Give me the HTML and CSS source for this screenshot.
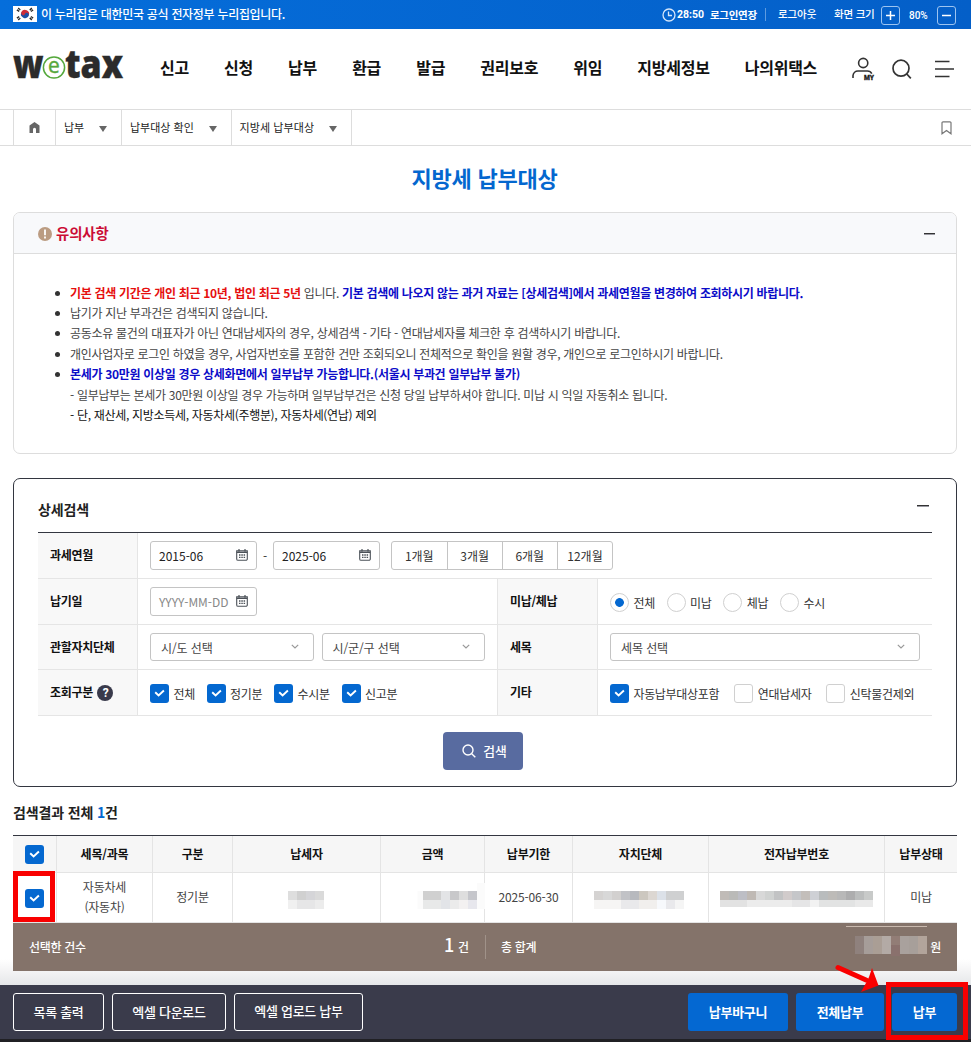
FILE: index.html
```html
<!DOCTYPE html>
<html lang="ko">
<head>
<meta charset="utf-8">
<title>지방세 납부대상</title>
<link rel="stylesheet" href="styles.css">
</head>
<body>
<svg class="defs" width="0" height="0" aria-hidden="true">
  <symbol id="cal" viewBox="0 0 12 12"><path d="M.7 1.900h10.600v8a1.400 1.400 0 0 1-1.400 1.400H2.100a1.400 1.400 0 0 1-1.400-1.400z" fill="none" stroke="#4b5158" stroke-width="1.100"/><path d="M.7 3.300h10.600M3 0v2.600M9 0v2.600" stroke="#4b5158" stroke-width="1.200" fill="none"/><path d="M3 6h1.500M5.300 6h1.500M7.600 6h1.500M3 8.400h1.500M5.300 8.400h1.500M7.600 8.400h1.500" stroke="#4b5158" stroke-width="1.400"/></symbol>
  <symbol id="chev" viewBox="0 0 8 5"><path d="M.8.8 4 4 7.200.8" fill="none" stroke="#999" stroke-width="1.200"/></symbol>
  <symbol id="check" viewBox="0 0 19 19"><path d="M5.200 8.200 8.600 11.500l5.300-5" fill="none" stroke="#fff" stroke-width="1.900"/></symbol>
</svg>

<div class="topbar">
  <svg class="flag" width="24" height="16" viewBox="0 0 24 16"><path fill="#fff" d="M0 0h24v16H0z"/><g transform="rotate(25 12 8)"><path d="M8 8a4 4 0 0 1 8 0z" fill="#cd2e3a"/><path d="M8 8a4 4 0 0 0 8 0z" fill="#1b50a5"/><circle cx="10" cy="8" r="2" fill="#cd2e3a"/><circle cx="14" cy="8" r="2" fill="#1b50a5"/></g><path d="M4 4.800 6.200 2M5.200 5.600 7.200 3M17.800 2 20 4.800M16.800 3l2 2.600M4 11.200 6.200 14M5.200 10.400l2 2.600M17.800 14l2.200-2.800M16.800 13l2-2.600" stroke="#222" stroke-width="1.300" stroke-dasharray="1.600 .5"/></svg>
  <span class="gov">이 누리집은 대한민국 공식 전자정부 누리집입니다.</span>
  <div class="util">
    <svg width="14" height="14" viewBox="0 0 14 14" fill="none" stroke="#d5e6fa" stroke-width="1.300"><circle cx="7" cy="7" r="6"/><path d="M6.500 3.500V7.500H10"/></svg>
    <b class="time">28:50</b><b class="extend">로그인연장</b><i class="bar"></i>
    <span class="logout">로그아웃</span><span class="size">화면 크기</span>
    <span class="zoombtn"><svg width="9" height="9" viewBox="0 0 9 9"><path d="M4.500 0v9M0 4.500h9" stroke="#fff" stroke-width="1.500"/></svg></span>
    <span class="pct">80%</span>
    <span class="zoombtn"><svg width="9" height="9" viewBox="0 0 9 9"><path d="M0 4.500h9" stroke="#fff" stroke-width="1.500"/></svg></span>
  </div>
</div>

<header class="header">
  <svg class="logo" width="112" height="32" viewBox="0 0 112 32">
    <text class="lg" x="0" y="27" textLength="30.500" lengthAdjust="spacingAndGlyphs">w</text>
    <text class="lg" x="52" y="27" textLength="58" lengthAdjust="spacingAndGlyphs">tax</text>
    <circle cx="41" cy="16.500" r="10.600" fill="#fff" stroke="#55a83c" stroke-width="1.500"/>
    <text class="le" x="41" y="22" text-anchor="middle">e</text>
  </svg>
  <nav class="nav"><span>신고</span><span>신청</span><span>납부</span><span>환급</span><span>발급</span><span>권리보호</span><span>위임</span><span>지방세정보</span><span>나의위택스</span></nav>
  <div class="tools">
    <svg width="24" height="26" viewBox="0 0 24 26" fill="none" stroke="#333" stroke-width="1.600"><circle cx="11.200" cy="7" r="4.600"/><path d="M1 22v-2.500A5 5 0 0 1 6 15h9.200a5 5 0 0 1 4.600 2.600"/><text class="my" x="12" y="24" textLength="10" lengthAdjust="spacingAndGlyphs">MY</text></svg>
    <svg width="20" height="21" viewBox="0 0 20 21" fill="none" stroke="#333" stroke-width="1.700"><circle cx="9" cy="9.200" r="8"/><path d="m14.800 15 4 4.300"/></svg>
    <svg width="20" height="18" viewBox="0 0 20 18" stroke="#333" stroke-width="1.700"><path d="M0 1.500h14.500M0 9h19M0 16.500h14.500"/></svg>
  </div>
</header>

<div class="crumbs">
  <span class="home"><svg width="11" height="11" viewBox="0 0 11 11"><path d="M5.500 0 10.500 3.600V11H7V7.200a1.500 1.500 0 0 0-3 0V11H.5V3.600z" fill="#666"/></svg></span>
  <span class="c1">납부<i></i></span><span class="c2">납부대상 확인<i></i></span><span class="c3">지방세 납부대상<i></i></span>
  <svg class="bookmark" width="11" height="14" viewBox="0 0 11 14"><path d="M1 1.800A1 1 0 0 1 2 .8h7a1 1 0 0 1 1 1v11L5.500 9.600 1 12.800z" fill="none" stroke="#777" stroke-width="1.200"/></svg>
</div>

<h1>지방세 납부대상</h1>

<section class="notice">
  <div class="nhead"><svg width="14" height="14" viewBox="0 0 14 14"><circle cx="7" cy="7" r="7" fill="#bb9c82"/><path d="M7 2.600v5.600M7 9.500v1.900" stroke="#fff" stroke-width="1.800"/></svg><span>유의사항</span><i class="minus"></i></div>
  <ul>
    <li class="l1"><b class="red">기본 검색 기간은 개인 최근 10년, 법인 최근 5년</b> 입니다. <b class="blue">기본 검색에 나오지 않는 과거 자료는 [상세검색]에서 과세연월을 변경하여 조회하시기 바랍니다.</b></li>
    <li>납기가 지난 부과건은 검색되지 않습니다.</li>
    <li>공동소유 물건의 대표자가 아닌 연대납세자의 경우, 상세검색 - 기타 - 연대납세자를 체크한 후 검색하시기 바랍니다.</li>
    <li>개인사업자로 로그인 하였을 경우, 사업자번호를 포함한 건만 조회되오니 전체적으로 확인을 원할 경우, 개인으로 로그인하시기 바랍니다.</li>
    <li><b class="blue">본세가 30만원 이상일 경우 상세화면에서 일부납부 가능합니다.(서울시 부과건 일부납부 불가)</b></li>
    <li class="sub">- 일부납부는 본세가 30만원 이상일 경우 가능하며 일부납부건은 신청 당일 납부하셔야 합니다. 미납 시 익일 자동취소 됩니다.</li>
    <li class="sub dark">- 단, 재산세, 지방소득세, 자동차세(주행분), 자동차세(연납) 제외</li>
  </ul>
</section>

<section class="search">
  <div class="shead"><span>상세검색</span><i class="minus"></i></div>
  <div class="form">
    <div class="th">과세연월</div>
    <div class="td wide">
      <span class="input">2015-06<svg width="12" height="12"><use href="#cal"/></svg></span><span class="dash">-</span><span class="input">2025-06<svg width="12" height="12"><use href="#cal"/></svg></span>
      <span class="months"><span>1개월</span><span>3개월</span><span>6개월</span><span>12개월</span></span>
    </div>
    <div class="th">납기일</div>
    <div class="td"><span class="input ph">YYYY-MM-DD<svg width="12" height="12"><use href="#cal"/></svg></span></div>
    <div class="th second">미납/체납</div>
    <div class="td opts">
      <label><i class="radio on"></i>전체</label><label><i class="radio"></i>미납</label><label><i class="radio"></i>체납</label><label><i class="radio"></i>수시</label>
    </div>
    <div class="th">관할자치단체</div>
    <div class="td selects"><span class="select">시/도 선택<svg width="8" height="5"><use href="#chev"/></svg></span><span class="select">시/군/구 선택<svg width="8" height="5"><use href="#chev"/></svg></span></div>
    <div class="th second">세목</div>
    <div class="td selects"><span class="select">세목 선택<svg width="8" height="5"><use href="#chev"/></svg></span></div>
    <div class="th">조회구분<i class="help">?</i></div>
    <div class="td opts">
      <label><svg class="chk on"><use href="#check"/></svg>전체</label><label><svg class="chk on"><use href="#check"/></svg>정기분</label><label><svg class="chk on"><use href="#check"/></svg>수시분</label><label><svg class="chk on"><use href="#check"/></svg>신고분</label>
    </div>
    <div class="th second">기타</div>
    <div class="td opts etc">
      <label><svg class="chk on"><use href="#check"/></svg>자동납부대상포함</label><label><i class="chk"></i>연대납세자</label><label><i class="chk"></i>신탁물건제외</label>
    </div>
  </div>
  <div class="go"><svg width="14" height="14" viewBox="0 0 14 14" fill="none" stroke="#fff" stroke-width="1.400"><circle cx="6" cy="6" r="5"/><path d="m9.700 9.700 3.600 3.600"/></svg>검색</div>
</section>

<h2>검색결과 전체 <em>1</em>건</h2>

<div class="grid head">
  <span><svg class="chk on"><use href="#check"/></svg></span><span>세목/과목</span><span>구분</span><span>납세자</span><span>금액</span><span>납부기한</span><span>자치단체</span><span>전자납부번호</span><span>납부상태</span>
</div>
<div class="grid row">
  <span class="pick"><svg class="chk on"><use href="#check"/></svg><i class="mark"></i></span>
  <span class="item">자동차세<br>(자동차)</span><span>정기분</span>
  <span><svg class="mosaic" width="36" height="18" viewBox="0 0 4 2"><path fill="#dedede" d="M0 0h1v1H0z"/><path fill="#d0d0d0" d="M1 0h1v1H1z"/><path fill="#d5d5d8" d="M2 0h1v1H2z"/><path fill="#dadada" d="M3 0h1v1H3z"/><path fill="#f0f0f0" d="M0 1h1v1H0z"/><path fill="#e6e6e7" d="M1 1h2v1H1z"/><path fill="#ececec" d="M3 1h1v1H3z"/></svg></span>
  <span class="amt"><svg class="mosaic" width="54" height="18" viewBox="0 0 6 2"><path fill="#fbfbfb" d="M-.6 0h.6v2h-.6zM6-.9h.9V2H6z"/><path fill="#d0d0d0" d="M0 0h2v1H0z"/><path fill="#e3e4e6" d="M2 0h1v1H2z"/><path fill="#c8c8ca" d="M3 0h1v1H3z"/><path fill="#dedede" d="M4 0h1v1H4z"/><path fill="#c5c6cb" d="M5 0h1v1H5z"/><path fill="#e8e9e9" d="M0 1h2v1H0z"/><path fill="#e2e4e8" d="M2 1h1v1H2z"/><path fill="#ebebeb" d="M3 1h1v1H3z"/><path fill="#f3f1f1" d="M4 1h1v1H4z"/><path fill="#e7e7ed" d="M5 1h1v1H5z"/></svg></span>
  <span class="date">2025-06-30</span>
  <span><svg class="mosaic town" width="90" height="18" viewBox="0 0 10 2"><path fill="#d5d3d2" d="M0 0h1v1H0z"/><path fill="#d8d8d8" d="M1 0h1v1H1z"/><path fill="#d2d0cf" d="M2 0h1v1H2z"/><path fill="#c1c2c6" d="M3 0h1v1H3z"/><path fill="#b7b9be" d="M4 0h1v1H4z"/><path fill="#ccc7bf" d="M5 0h1v1H5z"/><path fill="#dcd7d2" d="M6 0h1v1H6z"/><path fill="#dce1e8" d="M7 0h1v1H7z"/><path fill="#cfd0d1" d="M8 0h2v1H8z"/><path fill="#f6f5f4" d="M0 1h3v1H0z"/><path fill="#e9e9eb" d="M3 1h2v1H3z"/><path fill="#f1efed" d="M5 1h2v1H5z"/><path fill="#f7f9fc" d="M7 1h1v1H7z"/><path fill="#e9e9ec" d="M8 1h1v1H8z"/><path fill="#f5f5f5" d="M9 1h1v1H9z"/></svg></span>
  <span><svg class="mosaic" width="153" height="18" viewBox="0 0 17 2"><path fill="#c0bbb7" d="M0 0h1v1H0z"/><path fill="#babab8" d="M1 0h1v1H1z"/><path fill="#bdbec5" d="M2 0h1v1H2z"/><path fill="#bfb9b4" d="M3 0h1v1H3z"/><path fill="#d8d8d8" d="M4 0h1v1H4z"/><path fill="#d0d2d1" d="M5 0h1v1H5z"/><path fill="#c2c3c4" d="M6 0h1v1H6z"/><path fill="#d1cbcb" d="M7 0h1v1H7z"/><path fill="#c5c6c9" d="M8 0h1v1H8z"/><path fill="#c3beba" d="M9 0h1v1H9z"/><path fill="#ced0d5" d="M10 0h1v1h-1z"/><path fill="#b9bcbd" d="M11 0h1v1h-1z"/><path fill="#bdbbb8" d="M12 0h1v1h-1z"/><path fill="#b8b8b8" d="M13 0h1v1h-1z"/><path fill="#adadae" d="M14 0h1v1h-1z"/><path fill="#bbbdbd" d="M15 0h1v1h-1z"/><path fill="#c8cac9" d="M16 0h1v1h-1z"/><path fill="#e2e2e2" d="M0 1h3v.78H0z"/><path fill="#ececec" d="M3 1h5v.78H3z"/><path fill="#e5e5e6" d="M8 1h2v.78H8z"/><path fill="#f2f2f2" d="M10 1h1v.78h-1z"/><path fill="#e2e3e3" d="M11 1h4v.78h-4z"/><path fill="#e9e9e9" d="M15 1h2v.78h-2z"/></svg></span>
  <span>미납</span>
</div>
<div class="total">
  <span class="tl">선택한 건수</span><span class="cnt"><strong>1</strong>건</span><i class="bar"></i><span class="sum">총 합계</span>
  <span class="won"><svg width="81" height="46" viewBox="0 0 81 46"><path d="M0 2.500h81" stroke="#c9b9ae"/><path fill="#8f817d" d="M9 12h9v18H9z"/><path fill="#a69d99" d="M18 12h9v18h-9z"/><path fill="#aa9e95" d="M27 12h9v18h-9z"/><path fill="#b3aaa5" d="M36 12h9v18h-9z"/><path fill="#927d76" d="M45 12h9v9h-9z"/><path fill="#8a716d" d="M45 21h9v11h-9z"/><path fill="#a9a19d" d="M54 12h9v18h-9z"/><path fill="#a79f9a" d="M63 12h9v18h-9z"/><path fill="#b2a49b" d="M72 12h9v18h-9z"/></svg>원</span>
</div>
<div class="shade"></div>
<footer class="actions">
  <span class="btn b1">목록 출력</span><span class="btn b2">엑셀 다운로드</span><span class="btn b3">엑셀 업로드 납부</span>
  <span class="btn p1">납부바구니</span><span class="btn p2">전체납부</span><span class="btn p3">납부<i class="mark"></i></span>
  <svg class="arrow" width="46" height="32" viewBox="0 0 46 32"><path d="m4 6.500 28 12.500" stroke="#f90000" stroke-width="5" stroke-linecap="round"/><path d="M38 7l6.500 17.500L27 31l5-9 3-6z" fill="#f90000"/></svg>
</footer>
</body>
</html>
```
FILE: styles.css
```css
* { box-sizing: border-box; }
body {
  margin: 0; width: 971px; height: 1042px; overflow: hidden; background: #fff;
  font: 12px/20px "Noto Sans CJK KR", sans-serif; color: #333;
}
i, em { font-style: normal; }
svg { display: block; flex: none; }
.defs { position: absolute; }

.topbar { height: 29px; padding: 0 15px 0 13px; display: flex; align-items: center; color: #fff; background: linear-gradient(90deg, #056edb, #045fc8); }
.flag { margin-top: -1px; }
.gov { margin: -1px 0 0 4px; font-weight: 500; letter-spacing: -.3px; }
.util { margin-left: auto; display: flex; align-items: center; font-size: 10.500px; height: 29px; }
.time { margin-left: 1px; font-family: Roboto, sans-serif; font-size: 10.500px; width: 33px; }
.extend { width: 47px; letter-spacing: -.3px; white-space: nowrap; }
.util .bar { width: 1px; height: 13px; background: #5e9be0; margin-left: 8px; }
.logout { margin: -2px 0 0 12px; width: 38px; font-weight: 500; white-space: nowrap; letter-spacing: -.1px; }
.size { margin: -2px 0 0 18px; font-weight: 500; white-space: nowrap; letter-spacing: -.2px; width: 40px; }
.zoombtn { width: 19px; height: 19px; border: 1px solid #9cc4f1; border-radius: 3px; display: flex; align-items: center; justify-content: center; margin-left: 7px; margin-top: 2px; }
.pct { font: 500 10px/20px Roboto, sans-serif; margin-left: 9px; width: 21px; margin-top: 2px; }
.pct + .zoombtn { margin-left: 7px; }

.header { height: 81px; border-bottom: 1px solid #ddd; padding-left: 13px; display: flex; align-items: center; }
.logo { margin-top: -5px; width: 112px; overflow: visible; }
.lg { font: 800 39px "Open Sans", sans-serif; fill: #2b2b2b; stroke: #2b2b2b; stroke-width: .4px; }
.le { font: 400 21px "Open Sans", sans-serif; fill: #55a83c; stroke: #55a83c; stroke-width: .4px; }
.nav { display: flex; gap: 35.100px; margin-left: 35px; font-size: 16px; font-weight: 700; line-height: 24px; letter-spacing: -.25px; color: #111; white-space: nowrap; margin-top: -4px; }
.tools { margin-left: auto; display: flex; align-items: center; padding-right: 16px; gap: 17px; }
.tools svg:first-child { margin-right: -1px; }
.tools svg:last-child { margin-left: 6px; }
.my { font: 900 7px Roboto, sans-serif; fill: #222; stroke: #222; stroke-width: .3px; }

.crumbs { height: 36px; border-bottom: 1px solid #ddd; padding-left: 13px; display: flex; align-items: center; color: #222; font-size: 11px; }
.crumbs span { height: 35px; display: flex; align-items: center; border-right: 1px solid #ddd; padding: 0 14px 1px 8px; justify-content: space-between; }
.crumbs .home { width: 43px; border-left: 1px solid #ddd; padding: 0; justify-content: center; }
.c1 { width: 66px; }
.c2 { width: 110px; }
.crumbs .c3 { width: 120px; padding-left: 7.500px; letter-spacing: .1px; }
.crumbs i { border: 4.500px solid transparent; border-top: 6px solid #666; border-bottom: 0; margin-top: 4px; }
.bookmark { margin-left: auto; margin-right: 19px; }

h1 { margin: 0 2px 0 0; height: 66px; line-height: 62px; font-size: 22px; text-align: center; color: #0467cf; font-weight: 700; letter-spacing: -.2px; }

.notice { margin: 0 14px 0 13px; height: 242px; border: 1px solid #ddd; border-radius: 7px; overflow: hidden; }
.nhead { height: 41px; background: #f8f9fb; border-bottom: 1px solid #ddd; padding: 0 21px 0 24px; display: flex; align-items: center; font-size: 14.400px; font-weight: 700; color: #cb0c35; }
.nhead svg { margin-top: 1px; }
.nhead span { margin-left: 4px; letter-spacing: -.1px; }
.minus { width: 11px; height: 2px; background: linear-gradient(#333 50%, #9a9aa2 50%); margin-left: auto; }
.notice .minus { margin-top: 1px; }
.notice ul { margin: 0; padding: 28.500px 0 0 56px; list-style: none; font-size: 12px; line-height: 20.400px; letter-spacing: -.31px; color: #444; white-space: nowrap; }
.notice b { letter-spacing: -.31px; }
.notice li::before { content: ""; display: inline-block; width: 5px; height: 5px; border-radius: 50%; background: #333; margin: 0 10px 2px -15px; }
.notice li.sub::before { display: none; }
.notice .dark { color: #111; }
.red { color: #e60f0f; }
.blue { color: #0c0cc8; }

.search { margin: 24px 14px 0 13px; height: 309px; border: 1px solid #333640; border-radius: 7px; padding: 0 24px; }
.shead { height: 53px; padding: 6px 3px 0 0; display: flex; align-items: center; font-size: 14px; font-weight: 700; color: #222; letter-spacing: -.1px; }
.shead .minus { width: 12px; margin-top: -6px; }
.form { display: grid; grid-template-columns: 100px 359px 101px 334px; grid-template-rows: 46px 46px 45px 46px; border-top: 1px solid #333640; width: 894px; }
.th { background: #f8f8f8; border-right: 1px solid #e5e5e5; border-bottom: 1px solid #e5e5e5; padding: 0 0 1px 12px; font-weight: 700; color: #111; display: flex; align-items: center; letter-spacing: -.3px; }
.second { border-left: 1px solid #e5e5e5; }
.td { border-bottom: 1px solid #e5e5e5; padding-left: 12px; display: flex; align-items: center; white-space: nowrap; letter-spacing: -.1px; }
.wide { grid-column: 2 / 5; }
.input { width: 107px; height: 29px; border: 1px solid #c4c4c4; border-radius: 3px; padding: 1px 8px 0; display: flex; align-items: center; justify-content: space-between; font-size: 12px; letter-spacing: 0; color: #222; }
.input svg { margin-top: -2px; }
.ph { color: #888; letter-spacing: -.05px; }
.dash { width: 16px; text-align: center; }
.months { display: flex; margin-left: 11px; }
.months span { width: 56.200px; height: 29px; margin-right: -1px; border: 1px solid #c4c4c4; display: flex; align-items: center; justify-content: center; color: #333; letter-spacing: 0; padding-top: 1px; }
.months span:first-child { border-radius: 3px 0 0 3px; width: 56.500px; }
.months span:last-child { border-radius: 0 3px 3px 0; }
.opts label { display: flex; align-items: center; letter-spacing: -.3px; color: #333; margin-right: 11.800px; padding-top: 2px; }
.radio, .chk { width: 19px; height: 19px; border: 1px solid #d0d0d0; border-radius: 3px; margin-right: 4.400px; display: block; flex: none; }
.radio { border-radius: 50%; }
.radio.on { background: radial-gradient(circle, #0468d0 4px, #fff 4.700px); }
.chk.on { background: #0468d0; border: 0; }
.etc label { margin-right: 15px; }
.selects { gap: 8px; }
.select { width: 163.500px; height: 28px; border: 1px solid #c4c4c4; border-radius: 3px; padding: 2px 14px 0 10px; display: flex; align-items: center; justify-content: space-between; color: #444; }
.select svg { margin-top: -4px; }
.second + .selects .select { width: 310px; }
.help { width: 16px; height: 16px; border-radius: 50%; background: #393a4b; color: #fff; font: 700 12px/16px Roboto, sans-serif; text-align: center; margin: 2px 0 0 4.500px; }
.go { width: 80px; height: 38px; margin: 16px auto 0 405px; border-radius: 4px; background: #586ba0; color: #fff; display: flex; align-items: center; justify-content: center; gap: 7px; padding: 0 0 1px 3px; font-size: 12.800px; font-weight: 500; }

h2 { margin: 0 0 0 13px; height: 48px; line-height: 50px; font-size: 14px; font-weight: 700; color: #222; letter-spacing: -.15px; }
h2 em { color: #0468d0; }
.grid { margin: 0 14px 0 13px; display: grid; grid-template-columns: 44px 96px 80px 148px 104px 88px 136px 176px 72px; }
.grid > span { border-right: 1px solid #e4e4e4; border-bottom: 1px solid #e4e4e4; display: flex; align-items: center; justify-content: center; text-align: center; letter-spacing: -.2px; white-space: nowrap; }
.grid > span:last-child { border-right: 0; }
.grid .chk { margin: 0 0 0 -1px; }
.head { border-top: 1px solid #333640; height: 38px; background: #f6f6f6; font-weight: 700; color: #111; }
.row { height: 50px; color: #444; }
.row > span { padding-bottom: 1px; }
.row .mosaic { margin: 6px 0 0 -1px; overflow: visible; }
.row .town { margin-left: -4px; }
.row .amt { padding-left: 36px; }
.row .date { letter-spacing: -.15px; }
.row .pick { position: relative; padding: 1px 0 0; }
.pick .mark { position: absolute; left: 0; top: -2px; width: 42px; height: 51px; border: 5px solid #f90000; z-index: 2; }

.total { position: relative; z-index: 1; margin: 0 14px 0 13px; height: 48px; background: #84736a; color: #fff; display: flex; align-items: center; padding: 0 16px; font-weight: 500; letter-spacing: -.3px; }
.tl { width: 415px; }
.cnt { width: 25px; white-space: nowrap; margin-top: -3px; }
.cnt strong { font-size: 18px; font-weight: 500; margin-right: 4px; }
.total .bar { width: 1px; height: 24px; background: #a09289; margin-left: 16px; }
.sum { margin-left: 15px; }
.won { margin-left: auto; display: flex; align-items: center; gap: 3px; }
.shade { height: 26px; margin-top: -12px; background: linear-gradient(#fff, #f4f4f5 45%, #e5e7e9); }

.actions { position: relative; z-index: 2; height: 57px; background: #3a3b4b; border-bottom: 3px solid #202024; padding: 8px 14px 0 13px; display: flex; gap: 8px; color: #fff; font-size: 13px; font-weight: 500; }
.btn { height: 38px; border: 1px solid #fff; border-radius: 3px; display: flex; align-items: center; justify-content: center; white-space: nowrap; letter-spacing: -.3px; }
.b1 { width: 91px; } .b2 { width: 114px; } .b3 { width: 129px; padding-bottom: 2px; }
.p1, .p2, .p3 { border: 0; background: #0468d2; font-weight: 700; padding-bottom: 1px; }
.p1 { width: 100px; margin-left: auto; } .p2 { width: 88px; } .p3 { width: 65px; position: relative; }
.p3 .mark { position: absolute; left: -6px; top: -11px; width: 82px; height: 58px; border: 5px solid #f90000; }
.arrow { position: absolute; left: 834px; top: -24px; }
```
